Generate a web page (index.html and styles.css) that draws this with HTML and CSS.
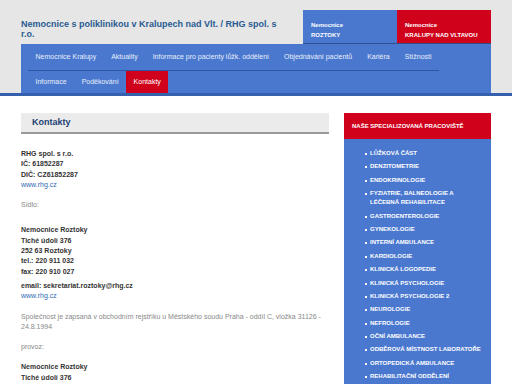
FILE: index.html
```html
<!DOCTYPE html>
<html lang="cs">
<head>
  <meta charset="UTF-8">
  <title>Kontakty - Nemocnice s poliklinikou v Kralupech nad Vlt.</title>
  <link rel="stylesheet" href="styles.css">
</head>
<body>
  <!-- Header: title, hospital switch, navigation -->
  <header class="header">
    <div class="header-inner">
      <div class="header-top">
        <h1 class="site-title">Nemocnice s poliklinikou v Kralupech nad Vlt. / RHG spol. s r.o.</h1>
        <div class="switch">
          <a class="switch-item switch-blue" href="#">Nemocnice<br>ROZTOKY</a>
          <a class="switch-item switch-red" href="#">Nemocnice<br>KRALUPY NAD VLTAVOU</a>
        </div>
      </div>
      <nav class="nav">
        <ul class="nav-row nav-row-first">
          <li><a href="#">Nemocnice Kralupy</a></li>
          <li><a href="#">Aktuality</a></li>
          <li><a href="#">Informace pro pacienty lůžk. oddělení</a></li>
          <li><a href="#">Objednávání pacientů</a></li>
          <li><a href="#">Kariéra</a></li>
          <li><a href="#">Stížnosti</a></li>
        </ul>
        <ul class="nav-row">
          <li><a href="#">Informace</a></li>
          <li><a href="#">Poděkování</a></li>
          <li><a class="active" href="#">Kontakty</a></li>
        </ul>
      </nav>
    </div>
  </header>

  <div class="main">
    <!-- Page content -->
    <main class="content">
      <h2 class="page-title">Kontakty</h2>

      <p class="strong">RHG spol. s r.o.<br>IČ: 61852287<br>DIČ: CZ61852287<br><a href="#">www.rhg.cz</a></p>

      <p class="muted sidlo">Sídlo:</p>

      <p class="strong">Nemocnice Roztoky<br>Tiché údolí 376<br>252 63 Roztoky<br>tel.: 220 911 032<br>fax: 220 910 027</p>
      <p class="strong tight">email: sekretariat.roztoky@rhg.cz<br><a href="#">www.rhg.cz</a></p>

      <p class="muted">Společnost je zapsaná v obchodním rejstříku u Městského soudu Praha - oddíl C, vložka 31126 - 24.8.1994</p>

      <p class="muted">provoz:</p>

      <p class="strong">Nemocnice Roztoky<br>Tiché údolí 376</p>
    </main>

    <!-- Sidebar with departments -->
    <aside class="sidebar">
      <h3 class="sidebar-title">Naše specializovaná pracoviště</h3>
      <ul class="dept-list">
        <li><a href="#">Lůžková část</a></li>
        <li><a href="#">Denzitometrie</a></li>
        <li><a href="#">Endokrinologie</a></li>
        <li><a href="#">Fyziatrie, balneologie a léčebná rehabilitace</a></li>
        <li><a href="#">Gastroenterologie</a></li>
        <li><a href="#">Gynekologie</a></li>
        <li><a href="#">Interní ambulance</a></li>
        <li><a href="#">Kardiologie</a></li>
        <li><a href="#">Klinická logopedie</a></li>
        <li><a href="#">Klinická psychologie</a></li>
        <li><a href="#">Klinická psychologie 2</a></li>
        <li><a href="#">Neurologie</a></li>
        <li><a href="#">Nefrologie</a></li>
        <li><a href="#">Oční ambulance</a></li>
        <li><a href="#">Odběrová místnost laboratoře</a></li>
        <li><a href="#">Ortopedická ambulance</a></li>
        <li><a href="#">Rehabilitační oddělení</a></li>
      </ul>
    </aside>
  </div>
</body>
</html>
```

FILE: styles.css
```css
/* Reset */
* {
  box-sizing: border-box;
  margin: 0;
  padding: 0;
}
body {
  font-family: "Liberation Sans", Arial, sans-serif;
  font-size: 7px;
  color: #333;
  background: #fff;
}
a {
  text-decoration: none;
}
ul {
  list-style: none;
}

/* Header */
.header {
  background-color: #e6e6e6;
  border-bottom: 3px solid #3560ae;
}
.header-inner {
  margin: 0 21px;
  padding-top: 10px;
}
.header-top {
  display: flex;
  justify-content: space-between;
}
.site-title {
  width: 268px;
  padding-top: 9px;
  font-size: 9px;
  line-height: 10px;
  color: #2a5b91;
}
.switch {
  display: flex;
  border-bottom: 1px solid #2f4f8c;
}
.switch-item {
  display: block;
  width: 94px;
  height: 33px;
  padding: 11px 8px 0;
  font-size: 6px;
  font-weight: bold;
  line-height: 9.5px;
  color: #fff;
}
.switch-blue {
  background-color: #4a78cf;
}
.switch-red {
  background-color: #d0021b;
}

/* Navigation */
.nav {
  background-color: #4a78cf;
  padding: 0 0 0 7px;
  height: 49px;
}
.nav-row {
  display: flex;
  height: 22px;
}
.nav-row-first {
  display: inline-flex;
  height: 27px;
  border-bottom: 1px solid #2d56a3;
}
.nav-row a {
  display: block;
  height: 100%;
  padding: 0 7.5px;
  line-height: 22px;
  color: #e8eefa;
  font-size: 7px;
}
.nav-row-first a {
  line-height: 25px;
}
.nav-row a.active {
  background-color: #d0021b;
  color: #fff;
}

/* Main layout */
.main {
  display: flex;
  gap: 15px;
  padding: 17px 21px 0;
}
.content {
  width: 308px;
}
.page-title {
  background-color: #ebebeb;
  border-bottom: 2px solid #9a9a9a;
  height: 21px;
  padding-left: 11px;
  font-size: 9px;
  line-height: 19px;
  color: #1d3f73;
  margin-bottom: 15px;
}
.content p {
  line-height: 10.3px;
  margin-bottom: 10px;
}
.content p.sidlo {
  margin-bottom: 15px;
}
.content p.tight {
  margin-top: -6px;
}
.strong {
  font-weight: bold;
}
.muted {
  color: #888;
}
.content a {
  color: #2f6ab6;
  font-weight: normal;
}

/* Sidebar */
.sidebar {
  width: 147px;
  background-color: #4a78cf;
}
.sidebar-title {
  background-color: #d0021b;
  color: #fff;
  height: 26px;
  padding-left: 8px;
  font-size: 6px;
  line-height: 26px;
  text-transform: uppercase;
}
.dept-list {
  padding: 10px 8.5px 8px 15px;
}
.dept-list li {
  position: relative;
  padding-left: 11px;
  font-size: 6px;
  font-weight: bold;
  line-height: 9px;
  margin-bottom: 4.4px;
  text-transform: uppercase;
}
.dept-list li::before {
  content: "";
  position: absolute;
  left: 6px;
  top: 4px;
  width: 2px;
  height: 2px;
  background-color: #fff;
}
.dept-list a {
  color: #fff;
}
```
